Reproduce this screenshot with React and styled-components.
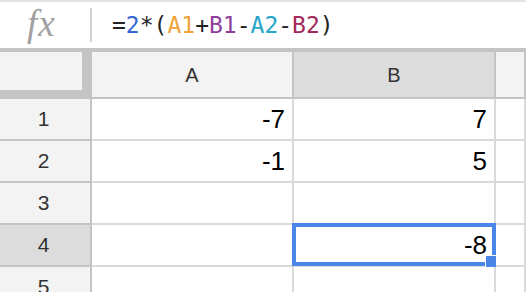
import React from "react";
import styled, { createGlobalStyle } from "styled-components";

const GlobalStyle = createGlobalStyle`
  html, body {
    margin: 0;
    padding: 0;
    background: #ffffff;
    overflow: hidden;
  }
`;

const Page = styled.div`
  width: 526px;
  height: 292px;
  overflow: hidden;
  display: flex;
  flex-direction: column;
`;

const FormulaBar = styled.div`
  height: 46px;
  border-top: 2px solid #e3e3e3;
  border-bottom: 4px solid #c4c4c4;
  display: flex;
  align-items: center;
  background: #fff;
`;

const Fx = styled.div`
  width: 90px;
  height: 46px;
  padding-left: 27px;
  box-sizing: border-box;
  font-family: "Liberation Serif", "DejaVu Serif", serif;
  font-style: italic;
  font-size: 37px;
  line-height: 44px;
  color: #a0a0a0;
  letter-spacing: 1px;
`;

const Divider = styled.div`
  width: 2px;
  height: 34px;
  background: #d2d2d2;
`;

const Formula = styled.div`
  padding-left: 20px;
  font-family: "DejaVu Sans Mono", "Liberation Mono", monospace;
  font-size: 23px;
  color: #222;
  white-space: pre;
`;

const Ref = styled.span`
  color: ${(p) => p.color};
`;

const Sheet = styled.div`
  display: grid;
  grid-template-columns: 92px 202px 202px 1fr;
  grid-template-rows: 47px repeat(5, 42px);
  font-family: "Liberation Sans", Arial, sans-serif;
`;

const Corner = styled.div`
  background: #f3f3f3;
  border-right: 10px solid #c4c4c4;
  border-bottom: 9px solid #c4c4c4;
  box-sizing: border-box;
`;

const ColHead = styled.div`
  box-sizing: border-box;
  background: ${(p) => (p.selected ? "#dcdcdc" : "#f3f3f3")};
  border-right: 2px solid #c4c4c4;
  border-bottom: 2px solid #c4c4c4;
  display: flex;
  align-items: center;
  justify-content: center;
  font-size: 20px;
  color: #333;
  padding-top: 2px;
`;

const RowHead = styled.div`
  box-sizing: border-box;
  background: ${(p) => (p.selected ? "#dcdcdc" : "#f3f3f3")};
  border-right: 2px solid #c4c4c4;
  border-bottom: 2px solid #c4c4c4;
  display: flex;
  align-items: center;
  justify-content: center;
  padding-right: 3px;
  font-size: 21px;
  color: #333;
`;

const Cell = styled.div`
  position: relative;
  box-sizing: border-box;
  background: #fff;
  border-right: 2px solid #dadada;
  border-bottom: 2px solid #dadada;
  display: flex;
  align-items: center;
  justify-content: flex-end;
  padding-right: 7px;
  font-size: 26px;
  color: #000;
`;

const Selection = styled.div`
  position: absolute;
  top: -2px;
  left: -2px;
  right: -2px;
  bottom: -1px;
  border: 4px solid #4a86e8;
  pointer-events: none;
`;

const Handle = styled.div`
  position: absolute;
  right: -6px;
  bottom: -6px;
  width: 11px;
  height: 11px;
  background: #4a86e8;
  border: 1px solid #fff;
`;

const data = [
  ["-7", "7"],
  ["-1", "5"],
  ["", ""],
  ["", "-8"],
  ["", ""],
];

export default function App() {
  return (
    <Page>
      <GlobalStyle />
      <FormulaBar>
        <Fx>fx</Fx>
        <Divider />
        <Formula>
          =<Ref color="#3367d6">2</Ref>*(<Ref color="#f0a33a">A1</Ref>+
          <Ref color="#8e3f9a">B1</Ref>-<Ref color="#25a5c8">A2</Ref>-
          <Ref color="#a52a5a">B2</Ref>)
        </Formula>
      </FormulaBar>
      <Sheet>
        <Corner />
        <ColHead>A</ColHead>
        <ColHead selected>B</ColHead>
        <ColHead />
        {data.map((row, i) => (
          <React.Fragment key={i}>
            <RowHead selected={i === 3}>{i + 1}</RowHead>
            <Cell>{row[0]}</Cell>
            <Cell>
              {row[1]}
              {i === 3 && (
                <Selection>
                  <Handle />
                </Selection>
              )}
            </Cell>
            <Cell />
          </React.Fragment>
        ))}
      </Sheet>
    </Page>
  );
}
